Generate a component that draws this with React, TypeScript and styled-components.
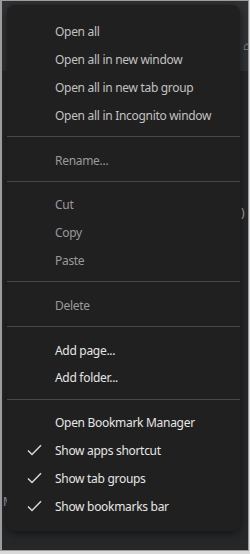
import React from 'react';
import styled, { createGlobalStyle } from 'styled-components';

const GlobalStyle = createGlobalStyle`
  html, body {
    margin: 0;
    padding: 0;
    background: #d9d9d9;
  }
  * {
    box-sizing: border-box;
  }
`;

const Frame = styled.div`
  position: relative;
  width: 249px;
  height: 551px;
  border: 1px solid #9c9c9c;
  border-left-width: 2px;
  background: linear-gradient(#313234 0, #313234 70px, #262729 70px, #262729 100%);
  padding: 4px 0 0 5px;
  overflow: hidden;
`;

const Menu = styled.div`
  position: relative;
  z-index: 1;
  width: 233px;
  height: 526px;
  background: #202020;
  border-radius: 8px;
  box-shadow: 0 2px 10px rgba(0, 0, 0, 0.55);
  padding: 13px 0 11px;
  display: flex;
  flex-direction: column;
  font-family: 'Noto Sans', 'Open Sans', sans-serif;
  font-size: 12px;
  letter-spacing: -0.3px;
`;

type Tone = 'dim' | 'muted' | 'bright';

const toneColor: Record<Tone, string> = {
  dim: '#c2c2c2',
  muted: '#9a9a9a',
  bright: '#e6e6e6',
};

const Item = styled.div<{ $tone: Tone }>`
  height: 28px;
  display: flex;
  align-items: center;
  color: ${(p) => toneColor[p.$tone]};
  white-space: nowrap;
`;

const CheckSlot = styled.span`
  width: 48px;
  flex: none;
  display: flex;
  align-items: center;
  padding-left: 20px;
`;

const Separator = styled.div`
  height: 1px;
  background: #474747;
  margin: 7px 0 9px;
`;

const Peek = styled.span<{ $x: number; $y: number }>`
  position: absolute;
  left: ${(p) => p.$x}px;
  top: ${(p) => p.$y}px;
  color: #a8a8a8;
  font-family: 'Noto Sans', sans-serif;
  font-size: 12px;
`;

const Check = () => (
  <svg width="15" height="12" viewBox="0 0 15 12">
    <path d="M1 6.5 L5 10.5 L14 1.2" fill="none" stroke="#d8d8d8" strokeWidth="1.5" />
  </svg>
);

type Entry = { label: string; tone: Tone; checked?: boolean } | 'sep';

const entries: Entry[] = [
  { label: 'Open all', tone: 'dim' },
  { label: 'Open all in new window', tone: 'dim' },
  { label: 'Open all in new tab group', tone: 'dim' },
  { label: 'Open all in Incognito window', tone: 'dim' },
  'sep',
  { label: 'Rename...', tone: 'muted' },
  'sep',
  { label: 'Cut', tone: 'muted' },
  { label: 'Copy', tone: 'muted' },
  { label: 'Paste', tone: 'muted' },
  'sep',
  { label: 'Delete', tone: 'muted' },
  'sep',
  { label: 'Add page...', tone: 'bright' },
  { label: 'Add folder...', tone: 'bright' },
  'sep',
  { label: 'Open Bookmark Manager', tone: 'bright' },
  { label: 'Show apps shortcut', tone: 'bright', checked: true },
  { label: 'Show tab groups', tone: 'bright', checked: true },
  { label: 'Show bookmarks bar', tone: 'bright', checked: true },
];

export default function App() {
  return (
    <>
      <GlobalStyle />
      <Frame>
        <Peek $x={241} $y={36}>⌂</Peek>
        <Peek $x={239} $y={203}>)</Peek>
        <Peek $x={1} $y={492}>M</Peek>
        <Menu>
          {entries.map((e, i) =>
            e === 'sep' ? (
              <Separator key={i} />
            ) : (
              <Item key={i} $tone={e.tone}>
                <CheckSlot>{e.checked && <Check />}</CheckSlot>
                {e.label}
              </Item>
            )
          )}
        </Menu>
      </Frame>
    </>
  );
}
